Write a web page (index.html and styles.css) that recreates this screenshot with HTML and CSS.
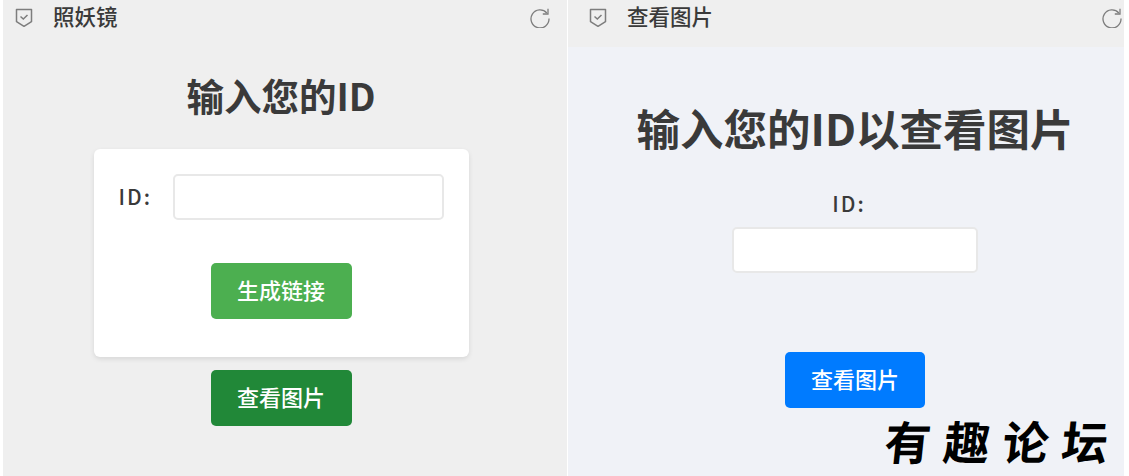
FILE: index.html
```html
<!DOCTYPE html>
<html lang="zh-CN">
<head>
    <meta charset="UTF-8">
    <meta name="viewport" content="width=device-width, initial-scale=1.0">
    <title>照妖镜</title>
    <link rel="stylesheet" href="styles.css">
</head>
<body>

<svg class="defs" width="0" height="0">
    <symbol id="shield" viewBox="0 0 18 20">
        <path d="M1.5 1.5h15v12.2L9 18.3 1.500 13.700z" fill="none" stroke="#7d7d7d" stroke-width="1.500" stroke-linejoin="round"/>
        <path d="M5.500 8.500 8.300 11l4.200-4" fill="none" stroke="#7d7d7d" stroke-width="1.500"/>
    </symbol>
    <symbol id="refresh" viewBox="0 0 20 20">
        <path d="M16.800 5A9 9 0 1 0 19 10.500" fill="none" stroke="#7d7d7d" stroke-width="1.300"/>
        <path d="M18 .8v5.200h-5.200" fill="none" stroke="#7d7d7d" stroke-width="1.300"/>
    </symbol>
</svg>

<div class="panel panel-left">
    <div class="header">
        <svg class="icon-shield"><use href="#shield"/></svg>
        <span class="header-title">照妖镜</span>
        <svg class="icon-refresh"><use href="#refresh"/></svg>
    </div>
    <div class="main">
        <h1 class="title-small">输入您的ID</h1>
        <div class="card">
            <div class="form-row">
                <label class="label">ID:</label>
                <input class="input input-wide" type="text">
            </div>
            <button class="btn btn-green">生成链接</button>
        </div>
        <button class="btn btn-dark">查看图片</button>
    </div>
</div>

<div class="panel panel-right">
    <div class="header">
        <svg class="icon-shield"><use href="#shield"/></svg>
        <span class="header-title">查看图片</span>
        <svg class="icon-refresh"><use href="#refresh"/></svg>
    </div>
    <div class="main">
        <h1 class="title-large">输入您的ID以查看图片</h1>
        <label class="label label-stacked">ID:</label>
        <input class="input input-short" type="text">
        <button class="btn btn-blue">查看图片</button>
    </div>
</div>

<div class="watermark">有趣论坛</div>

</body>
</html>
```

FILE: styles.css
```css
* {
    box-sizing: border-box;
}
html, body {
    height: 476px;
    overflow: hidden;
}
body {
    position: relative;
    display: flex;
    gap: 1px;
    margin: 0;
    padding: 0 5px 0 3px;
    background-color: #fff;
    color: #3a3a3a;
    font-family: "Noto Sans CJK SC", "Noto Sans", sans-serif;
}
.defs {
    position: absolute;
}
.panel {
    display: flex;
    flex-direction: column;
    height: 476px;
    background-color: #efefef;
}
.panel-left {
    width: 564px;
}
.panel-right {
    width: 556px;
    background-color: #f0f2f7;
}
.header {
    display: flex;
    align-items: center;
    height: 47px;
    padding: 0 17px 11px 12px;
    background-color: #efefef;
}
.panel-right .header {
    padding: 0 2px 11px 21px;
}
.icon-shield {
    width: 18px;
    height: 20px;
    margin-right: 20px;
}
.icon-refresh {
    width: 20px;
    height: 20px;
    margin-left: auto;
}
.header-title {
    margin-bottom: 4px;
    font-size: 21.500px;
    line-height: 36px;
    font-weight: 500;
}
.main {
    display: flex;
    flex-direction: column;
    align-items: center;
}
.panel-left .main {
    padding-right: 8px;
}
.panel-right .main {
    padding-left: 18px;
}
.title-small {
    margin: 23px 0 29px;
    font-size: 37.500px;
    line-height: 50px;
    font-weight: 700;
}
.title-large {
    margin: 51px 0 34px;
    font-size: 43.500px;
    line-height: 60px;
    font-weight: 700;
}
.card {
    display: flex;
    flex-direction: column;
    align-items: center;
    width: 375px;
    height: 208px;
    padding: 25px 25px 0;
    background-color: #fff;
    border-radius: 6px;
    box-shadow: 0 2px 5px rgba(0, 0, 0, 0.1);
}
.form-row {
    display: flex;
    align-items: center;
    justify-content: space-between;
    width: 100%;
    margin-bottom: 43px;
}
.label {
    margin-bottom: 2px;
    font-size: 21px;
    line-height: 24px;
    font-weight: 500;
    letter-spacing: 2px;
}
.label-stacked {
    margin: -1px 12px 12px 0;
}
.input {
    height: 46px;
    background-color: #fff;
    border: 2px solid #e8e8e8;
    border-radius: 5px;
}
.input-wide {
    width: 271px;
}
.input-short {
    width: 246px;
}
.btn {
    width: 141px;
    height: 56px;
    padding: 0 0 4px;
    border: none;
    border-radius: 5px;
    color: #fff;
    font-family: inherit;
    font-size: 22px;
    font-weight: 500;
}
.btn-green {
    background-color: #4caf50;
}
.btn-dark {
    margin-top: 13px;
    background-color: #218838;
}
.btn-blue {
    width: 140px;
    margin-top: 79px;
    background-color: #007bff;
}
.watermark {
    position: absolute;
    left: 885px;
    top: 411px;
    font-size: 46px;
    line-height: 58px;
    font-weight: 700;
    letter-spacing: 13px;
    white-space: nowrap;
    color: #000;
    transform: skewX(-6deg);
}
```
